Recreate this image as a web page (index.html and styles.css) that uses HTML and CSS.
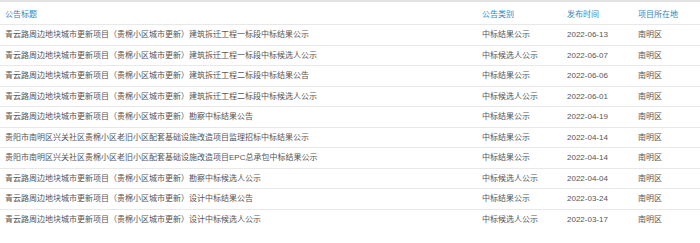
FILE: index.html
```html
<!DOCTYPE html>
<html lang="zh-CN">
<head>
<meta charset="utf-8">
<link rel="stylesheet" href="styles.css">
</head>
<body>
<div class="list">
  <div class="row head">
    <div class="c">公告标题</div><div class="c">公告类别</div><div class="c">发布时间</div><div class="c">项目所在地</div>
  </div>
  <div class="row"><div class="c">青云路周边地块城市更新项目（贵棉小区城市更新）建筑拆迁工程一标段中标结果公示</div><div class="c">中标结果公示</div><div class="c">2022-06-13</div><div class="c">南明区</div></div>
  <div class="row"><div class="c">青云路周边地块城市更新项目（贵棉小区城市更新）建筑拆迁工程一标段中标候选人公示</div><div class="c">中标候选人公示</div><div class="c">2022-06-07</div><div class="c">南明区</div></div>
  <div class="row"><div class="c">青云路周边地块城市更新项目（贵棉小区城市更新）建筑拆迁工程二标段中标结果公告</div><div class="c">中标结果公示</div><div class="c">2022-06-06</div><div class="c">南明区</div></div>
  <div class="row"><div class="c">青云路周边地块城市更新项目（贵棉小区城市更新）建筑拆迁工程二标段中标候选人公示</div><div class="c">中标候选人公示</div><div class="c">2022-06-01</div><div class="c">南明区</div></div>
  <div class="row"><div class="c">青云路周边地块城市更新项目（贵棉小区城市更新）勘察中标结果公告</div><div class="c">中标结果公示</div><div class="c">2022-04-19</div><div class="c">南明区</div></div>
  <div class="row"><div class="c">贵阳市南明区兴关社区贵棉小区老旧小区配套基础设施改造项目监理招标中标结果公示</div><div class="c">中标结果公示</div><div class="c">2022-04-14</div><div class="c">南明区</div></div>
  <div class="row"><div class="c">贵阳市南明区兴关社区贵棉小区老旧小区配套基础设施改造项目EPC总承包中标结果公示</div><div class="c">中标结果公示</div><div class="c">2022-04-14</div><div class="c">南明区</div></div>
  <div class="row"><div class="c">青云路周边地块城市更新项目（贵棉小区城市更新）勘察中标候选人公示</div><div class="c">中标候选人公示</div><div class="c">2022-04-04</div><div class="c">南明区</div></div>
  <div class="row"><div class="c">青云路周边地块城市更新项目（贵棉小区城市更新）设计中标结果公告</div><div class="c">中标结果公示</div><div class="c">2022-03-24</div><div class="c">南明区</div></div>
  <div class="row last"><div class="c">青云路周边地块城市更新项目（贵棉小区城市更新）设计中标候选人公示</div><div class="c">中标候选人公示</div><div class="c">2022-03-17</div><div class="c">南明区</div></div>
</div>
</body>
</html>
```
FILE: styles.css
```css
html, body {
  margin: 0;
  padding: 0;
  background: #fff;
}
body {
  font-family: "Liberation Sans", "Noto Sans CJK SC", sans-serif;
  font-size: 8px;
  color: #555;
}
.list {
  width: 700px;
  border-top: 2px solid #e2e2e2;
}
.row {
  display: grid;
  grid-template-columns: 477px 85px 71px 1fr;
  align-items: center;
  height: 20.5px;
  box-sizing: border-box;
  border-bottom: 1px solid #e8e8e8;
  padding-top: 1px;
}
.row.head {
  height: 23px;
  padding-top: 4px;
  color: #3585c2;
}
.row.last {
  border-bottom: none;
}
.c {
  padding-left: 5px;
  white-space: nowrap;
  line-height: 1;
}
```
